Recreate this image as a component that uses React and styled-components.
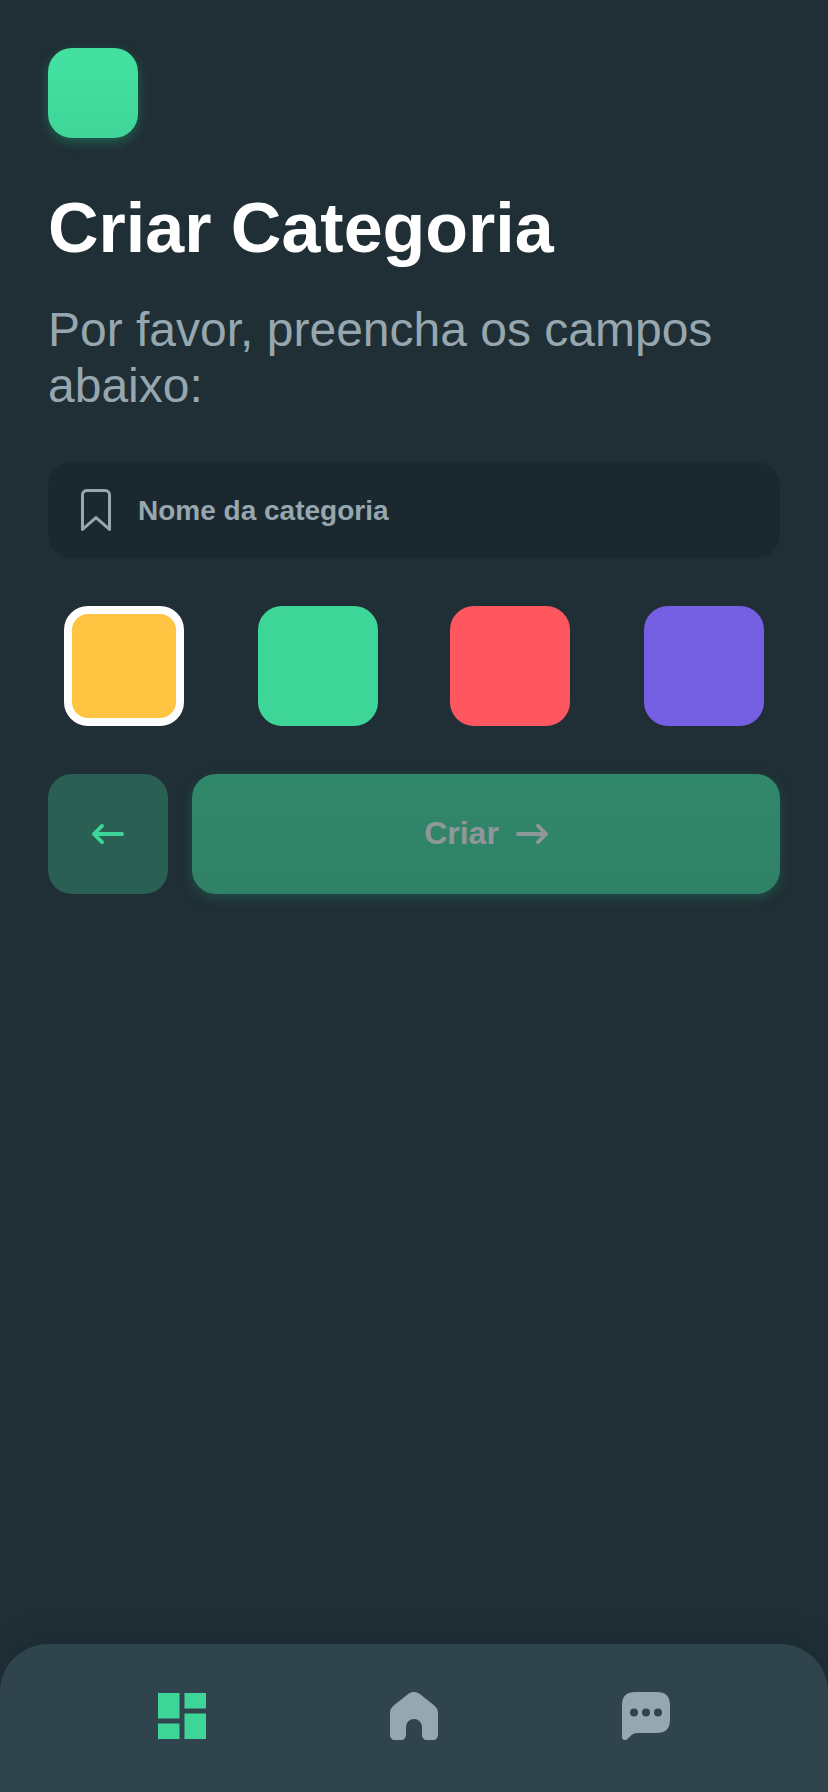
import React, { useState } from "react";
import styled, { createGlobalStyle } from "styled-components";

const GlobalStyle = createGlobalStyle`
  *, *::before, *::after { box-sizing: border-box; }
  body {
    margin: 0;
    background: #202e35;
    font-family: "Liberation Sans", Arial, sans-serif;
  }
  button, input { font-family: inherit; border: 0; margin: 0; padding: 0; }
`;

const Screen = styled.div`
  display: flex;
  flex-direction: column;
  min-height: 100vh;
  background: #202e35;
`;

const Content = styled.main`
  flex: 1;
  display: flex;
  flex-direction: column;
  padding: 48px;
`;

const Logo = styled.div`
  width: 90px;
  height: 90px;
  border-radius: 24px;
  background: linear-gradient(180deg, #43e0a0 0%, #42dfa0 30%, #3fd598 100%);
  box-shadow: 0 4px 12px rgba(31, 178, 119, 0.4);
`;

const Title = styled.h1`
  margin: 48px 0 0;
  font-size: 70px;
  line-height: 84px;
  font-weight: 700;
  color: #ffffff;
`;

const Subtitle = styled.p`
  margin: 32px 0 0;
  font-size: 48px;
  line-height: 56px;
  color: #96a7af;
`;

const Field = styled.label`
  display: flex;
  align-items: center;
  gap: 27px;
  height: 96px;
  margin-top: 48px;
  padding: 0 33px;
  border-radius: 24px;
  background: #1b282f;
`;

const FieldInput = styled.input`
  flex: 1;
  height: 100%;
  padding-top: 2px;
  background: transparent;
  outline: 0;
  font-size: 28px;
  font-weight: 700;
  color: #ffffff;
  &::placeholder { color: #96a7af; opacity: 1; }
`;

const Swatches = styled.div`
  display: grid;
  grid-template-columns: 194px 192px 194px 120px;
  padding: 0 16px;
  margin-top: 48px;
`;

const Swatch = styled.button`
  width: 120px;
  height: 120px;
  border-radius: 24px;
  background: ${(p) => p.$color};
  border: 8px solid ${(p) => (p.$selected ? "#ffffff" : p.$color)};
`;

const Actions = styled.div`
  display: flex;
  gap: 24px;
  margin-top: 48px;
`;

const BackButton = styled.button`
  display: flex;
  align-items: center;
  justify-content: center;
  width: 120px;
  height: 120px;
  border-radius: 24px;
  background: #296053;
  color: #3ed598;
`;

const CreateButton = styled.button`
  flex: 1;
  display: flex;
  align-items: center;
  justify-content: center;
  gap: 17px;
  height: 120px;
  border-radius: 24px;
  background: linear-gradient(180deg, #43e0a0 0%, #3fd598 100%);
  box-shadow: 0 4px 12px rgba(31, 178, 119, 0.5);
  color: #ffffff;
  font-size: 32px;
  font-weight: 700;
  opacity: 0.5;
`;

const CreateLabel = styled.span`
  margin-bottom: 2px;
`;

const NavBar = styled.nav`
  display: flex;
  justify-content: space-between;
  align-items: flex-start;
  height: 148px;
  padding: 48px 158px 0;
  border-radius: 48px 48px 0 0;
  background: #30444e;
  box-shadow: 0 -10px 20px rgba(25, 43, 49, 0.55);
`;

const NavItem = styled.button`
  display: flex;
  width: 48px;
  height: 48px;
  background: transparent;
  color: ${(p) => (p.$active ? "#3ed598" : "#96a7af")};
`;

const Arrow = ({ left }) => (
  <svg width="32" height="20" viewBox="0 0 32 20" fill="none" stroke="currentColor"
    strokeWidth="3.8" strokeLinecap="round" strokeLinejoin="round">
    {left ? <path d="M30.1 10H2M10 1.9L2 10L10 18.1" /> : <path d="M1.9 10H30M22 1.9L30 10L22 18.1" />}
  </svg>
);

const Bookmark = () => (
  <svg width="30" height="42" viewBox="0 0 30 42" fill="none" stroke="#96a7af" strokeWidth="3"
    strokeLinejoin="round">
    <path d="M1.5 40.4V5.7A4.2 4.2 0 0 1 5.7 1.5H24.3A4.2 4.2 0 0 1 28.5 5.7V40.4L15 28.6Z" />
  </svg>
);

const DashboardIcon = () => (
  <svg width="48" height="48" viewBox="0 0 48 48" fill="currentColor">
    <path d="M0 1H21.5V26.5H0ZM0 31.5H21.5V47H0ZM26.5 1H48V16.5H26.5ZM26.5 21.5H48V47H26.5Z" />
  </svg>
);

const HomeIcon = () => (
  <svg width="48" height="48" viewBox="0 0 48 48" fill="currentColor">
    <path d="M18.5 1.8C21.8-.6 26.2-.6 29.5 1.8L44 13.2C46.6 15.3 48 18 48 21V42.7C48 45.7 46 48 43 48H37C34 48 32 45.7 32 42.7V35A8 8 0 0 0 16 35V42.7C16 45.7 14 48 11 48H5C2 48 0 45.7 0 42.7V21C0 18 1.4 15.3 4 13.2Z" />
  </svg>
);

const ChatIcon = () => (
  <svg width="48" height="48" viewBox="0 0 48 48" fill="currentColor" fillRule="evenodd">
    <path d="M0 14C0 4 4 0 14 0H34C44 0 48 4 48 14V27C48 37 44 41 34 41H16C12 41 10 42.5 7.5 45L5.5 47C3.5 49 0 48 0 45ZM16 20.4A4 4 0 1 0 8 20.4A4 4 0 1 0 16 20.4ZM28 20.4A4 4 0 1 0 20 20.4A4 4 0 1 0 28 20.4ZM40 20.4A4 4 0 1 0 32 20.4A4 4 0 1 0 40 20.4Z" />
  </svg>
);

const COLORS = ["#ffc542", "#3ed598", "#ff575f", "#755fe2"];

export default function App() {
  const [name, setName] = useState("");
  const [color, setColor] = useState(COLORS[0]);
  return (
    <Screen>
      <GlobalStyle />
      <Content>
        <Logo />
        <Title>Criar Categoria</Title>
        <Subtitle>Por favor, preencha os campos abaixo:</Subtitle>
        <Field>
          <Bookmark />
          <FieldInput
            placeholder="Nome da categoria"
            value={name}
            onChange={(e) => setName(e.target.value)}
          />
        </Field>
        <Swatches>
          {COLORS.map((c) => (
            <Swatch key={c} $color={c} $selected={c === color} onClick={() => setColor(c)} />
          ))}
        </Swatches>
        <Actions>
          <BackButton aria-label="Voltar"><Arrow left /></BackButton>
          <CreateButton><CreateLabel>Criar</CreateLabel><Arrow /></CreateButton>
        </Actions>
      </Content>
      <NavBar>
        <NavItem $active><DashboardIcon /></NavItem>
        <NavItem><HomeIcon /></NavItem>
        <NavItem><ChatIcon /></NavItem>
      </NavBar>
    </Screen>
  );
}
